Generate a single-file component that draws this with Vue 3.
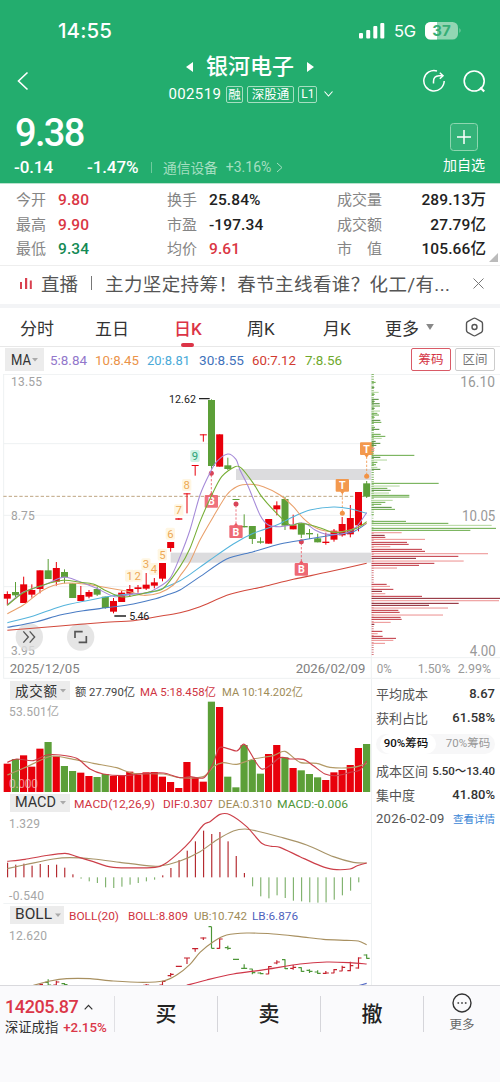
<script setup>
// Chart geometry is kept in thirds of a pixel for sub-pixel accuracy.
const STEP = 24.5
const cx = (i) => 22 + i * STEP

const rawCandles = [
  'r 664 672 686 706', 'g 636 666 676 681', 'r 620 643 699 699', 'r 643 660 674 683',
  'r 601 601 657 670', 'g 567 601 627 627', 'r 576 594 635 647', 'g 598 606 622 640',
  'g 640 640 684 684', 'r 648 675 693 693', 'r 660 666 680 685', 'g 650 657 674 678',
  'g 680 680 714 716', 'r 684 693 725 730', 'r 662 668 696 696', 'r 645 657 671 680',
  'r 645 652 657 668', 'r 609 644 656 660', 'r 624 637 647 655', 'r 579 579 626 634',
  'r 516 516 534 545', 'r 445 445 449 449', 'r 370 370 373 430', 'r 285 285 288 317',
  'r 193 193 196 215', 'g 88 90 288 296', 'r 193 193 290 290', 'g 263 286 297 300',
  'g 387 387 390 390', 'g 433 468 472 472', 'g 468 468 507 522', 'g 502 514 518 521',
  'r 447 447 521 521', 'r 394 406 418 436', 'g 380 387 467 480', 'r 434 466 478 478',
  'g 458 461 494 504', 'g 477 489 493 507', 'g 491 505 517 517', 'r 488 515 519 524',
  'r 477 482 509 515', 'r 441 462 496 500', 'r 405 444 493 502', 'r 366 366 466 484',
  'g 333 340 380 384',
]
const tone = { r: '#e8000b', g: '#5c9f38' }
const candles = rawCandles.map((s, i) => {
  const [c, hi, top, bot, lo] = s.split(' ')
  return { x: cx(i), c: tone[c], hi: +hi, top: +top, bot: +bot, lo: +lo }
})

function smooth(str) {
  const p = str.split(' ').map((s) => s.split(',').map(Number))
  let d = `M${p[0]}`
  for (let i = 0; i < p.length - 1; i++) {
    const a = p[i - 1] || p[i]
    const b = p[i]
    const c = p[i + 1]
    const e = p[i + 2] || c
    d += `C${b[0] + (c[0] - a[0]) / 7},${b[1] + (c[1] - a[1]) / 7} ${c[0] - (e[0] - b[0]) / 7},${c[1] - (e[1] - b[1]) / 7} ${c}`
  }
  return d
}

const averages = [
  ['#d2493c', '22,781 180,768 300,758 400,752 470,740 540,728 600,710 690,673 790,650 880,628 980,607 1100,580'],
  ['#4a7cc4', '22,772 110,755 180,735 250,722 330,712 400,702 460,688 500,675 540,660 600,620 680,567 760,545 840,522 920,508 1000,495 1060,485 1100,460'],
  ['#55b4dc', '22,758 100,738 180,710 260,692 340,677 400,672 450,668 500,650 540,632 570,613 630,570 700,522 760,490 830,465 880,440 930,420 1000,411 1050,416 1100,430'],
  ['#e9a06b', '22,731 70,705 130,660 190,640 260,643 330,655 390,665 430,676 480,668 520,645 540,618 570,575 600,510 640,440 680,375 710,350 750,343 790,350 840,375 880,410 910,445 950,475 1000,486 1050,480 1100,460'],
  ['#a58ad8', '22,704 70,666 130,646 180,624 200,622 240,635 290,655 345,680 400,672 440,668 470,655 510,625 540,560 570,480 600,375 630,308 650,275 683,252 708,268 720,300 745,350 780,435 805,465 840,470 875,465 900,459 920,462 945,480 975,492 1010,493 1040,488 1070,470 1100,428'],
  ['#76ae35', '22,706 70,668 130,645 190,631 240,637 280,642 320,663 365,681 410,675 450,665 490,655 540,590 570,535 600,455 634,378 665,320 705,290 725,295 760,340 785,380 830,430 870,465 900,460 950,470 1000,487 1030,485 1070,475 1100,455'],
].map(([c, p]) => ({ c, d: smooth(p) }))

const counts = [
  [1, 389, 617], [2, 413, 617], [3, 438, 583], [4, 462, 597], [5, 487, 554],
  [6, 511, 491], [7, 536, 421], [8, 560, 345], [9, 585, 258],
]
const signals = [
  { t: 'B', x: 634, y: 394, dot: 310, c: '#ec5965', o: 0.85 },
  { t: 'B', x: 708, y: 485, dot: 402, c: '#ec5965', o: 0.9 },
  { t: 'B', x: 904, y: 598, dot: 515, c: '#ec5965', o: 0.9 },
  { t: 'T', x: 1027, y: 346, dot: 430, c: '#f29345', o: 0.95 },
  { t: 'T', x: 1100, y: 236, dot: 319, c: '#f29345', o: 0.95 },
]

// Cost distribution: position, length, shade
const chipRows = `37 12 a,52 8 b,67 21 c,73 9 a,88 21 b,94 9 b,101 24 b,108 25 a,115 9 b,123 25 c,130 17 a,135 22 a,142 9 a,151 26 b,157 29 a,172 10 a,178 23 b,193 27 a,199 41 a,205 30 c,214 12 b,220 26 b,226 14 b,235 9 e,241 8 e,256 128 a,262 26 b,270 46 c,277 17 a,284 13 a,292 17 c,298 26 b,340 201 a,348 84 c,355 47 a,361 57 b,369 52 c,376 113 a,381 113 a,391 63 c,397 41 a,403 29 a,412 60 b,418 70 a,454 103 a,460 230 a,466 360 c,475 373 a,481 296 a,488 90 e,496 39 f,502 41 d,508 160 e,517 106 d,523 111 d,530 56 e,538 151 d,544 160 d,551 349 e,559 260 d,565 133 f,573 276 e,580 188 d,586 142 d,594 76 e,643 45 d,649 55 e,658 65 d,664 31 f,671 41 e,679 151 d,685 385 f,692 382 e,700 261 f,706 172 f,714 229 e,721 80 d,727 84 d,735 214 e,742 87 d,748 90 d,757 57 e,763 8 f,784 32 d,791 18 e,799 33 d,805 73 d,811 65 e,820 40 e`
const shade = { a: '#6fae51', b: '#568f40', c: '#b6d9a2', d: '#c33e49', e: '#ee9696', f: '#8e2a36' }
const chips = chipRows.split(',').map((s) => {
  const [y, w, k] = s.split(' ')
  return { y: +y, w: +w, c: shade[k] }
})

const volTops = [266, 252, 241, 275, 221, 201, 244, 273, 288, 293, 303, 306, 297, 303, 303, 290, 299, 292, 291, 305, 321, 339, 261, 307, 320, 80, 96, 305, 337, 210, 255, 296, 237, 210, 247, 279, 286, 297, 307, 315, 292, 285, 270, 219, 207]
const volTone = 'rgrrrgrggrrggrrrrrrrrrrrrgrgggggrrgrgggrrrrrg'
const volumes = volTops.map((y, i) => ({ x: cx(i) - 11, y, c: tone[volTone[i]] }))
const volLines = [
  ['#b39a66', '22,300 70,280 130,252 160,243 220,253 280,265 350,278 400,295 490,297 540,308 610,305 640,275 670,263 710,268 760,252 820,242 855,229 900,262 950,265 990,277 1060,277 1100,265'],
  ['#cc3f49', '22,262 50,252 100,257 140,240 180,240 230,250 270,282 310,297 370,302 430,296 490,294 540,308 570,305 612,308 640,265 660,217 710,228 735,209 785,282 840,248 870,252 910,253 940,272 975,297 1010,302 1050,292 1080,285 1100,258'],
].map(([c, p]) => ({ c, d: smooth(p) }))

const macdEnds = [563, 569, 566, 572, 567, 570, 569, 578, 598, 611, 619, 624, 637, 639, 635, 629, 624, 619, 614, 601, 579, 555, 527, 499, 467, 477, 471, 499, 543, 594, 634, 664, 670, 661, 669, 677, 679, 682, 683, 682, 674, 661, 647, 622]
const macdLines = [
  ['#a89468', '22,581 90,566 160,552 210,548 280,552 360,562 440,572 480,573 540,558 600,530 650,495 700,468 735,462 770,468 840,486 920,510 1000,545 1060,562 1100,564'],
  ['#cc3f49', '22,559 75,553 130,543 195,535 230,545 280,560 340,577 465,577 500,563 540,530 570,500 610,450 630,440 660,418 690,419 740,455 785,505 815,514 840,517 900,545 960,572 1000,583 1050,582 1070,573 1100,564'],
].map(([c, p]) => ({ c, d: smooth(p) }))

const bollLines = [
  ['#a89060', '100,931 150,918 200,911 270,911 340,918 430,922 490,918 530,900 570,868 600,832 640,800 680,780 740,774 820,777 900,785 970,793 1040,796 1075,798 1100,809'],
  ['#cf3648', '560,931 620,915 700,897 800,883 900,867 980,861 1050,863 1100,867'],
  ['#5268c4', '1076,932 1100,925'],
].map(([c, p]) => ({ c, d: smooth(p) }))
const bollBars = `4 r 927 932 931 928,5 g 913 932 922 930,6 r 917 932 930 921,7 g 924 932 926 929,17 r 927 932 931 930,19 r 917 932 930 919,20 r 894 905 902 898,21 r 873 875 874 874,22 r 848 867 849 849,23 r 820 830 821 821,24 r 787 795 789 789,25 g 755 820 755 820,26 r 790 821 820 792,27 g 812 824 818 820,28 g 852 854 853 853,29 g 868 881 880 880,30 g 881 898 882 893,31 g 892 898 894 896,32 r 873 898 897 875,33 r 856 868 864 861,34 g 853 882 854 881,35 r 870 884 880 877,36 g 877 890 878 889,37 g 883 894 886 889,38 g 886 897 891 895,39 r 888 897 895 894,40 r 882 895 894 884,41 r 872 889 888 877,42 r 860 889 887 872,43 r 847 881 879 849,44 g 838 851 840 850`
  .split(',')
  .map((s) => {
    const [i, k, hi, lo, o, c] = s.split(' ')
    const x = cx(+i)
    return { c: k === 'r' ? '#c5202c' : '#4d9638', d: `M${x} ${hi}V${lo}M${x - 9} ${o}H${x}M${x} ${c}H${x + 9}` }
  })

const maLegend = [
  ['5:8.84', 50, 37, '#9277cb'], ['10:8.45', 95, 44, '#eb9349'], ['20:8.81', 147, 43, '#4aaad8'],
  ['30:8.55', 199, 45, '#3f72bb'], ['60:7.12', 252, 44, '#d23a30'], ['7:8.56', 305, 37, '#6fa92c'],
]
const volLegend = [
  ['额 27.790亿', 75, 60, '#444'], ['MA 5:18.458亿', 140, 76, '#cf3442'], ['MA 10:14.202亿', 222, 81, '#a08c58'],
]
const macdLegend = [
  ['MACD(12,26,9)', 74, 81, '#cf3442'], ['DIF:0.307', 163, 50, '#cf3442'],
  ['DEA:0.310', 218, 54, '#a08c58'], ['MACD:-0.006', 277, 71, '#4f9639'],
]
const bollLegend = [
  ['BOLL(20)', 69, 50, '#cf3442'], ['BOLL:8.809', 128, 60, '#cf3442'],
  ['UB:10.742', 194, 53, '#a08c58'], ['LB:6.876', 252, 46, '#4d62bd'],
]

const stats = [
  ['今开', '9.80', 'up', '换手', '25.84%', '', '成交量', '289.13万'],
  ['最高', '9.90', 'up', '市盈', '-197.34', '', '成交额', '27.79亿'],
  ['最低', '9.34', 'down', '均价', '9.61', 'up', '市　值', '105.66亿'],
]
</script>

<template>
  <div class="screen">
    <header class="top">
      <div class="status">
        <span class="clock">14:55</span>
        <div class="sys">
          <svg width="26" height="17" viewBox="0 0 26 17" fill="#fff">
            <rect x="0" y="11" width="4" height="5.500" rx="1" /><rect x="7.200" y="8" width="4" height="8.500" rx="1" />
            <rect x="14.300" y="4" width="4" height="12.500" rx="1" /><rect x="21.300" y="1" width="4" height="15.500" rx="1" />
          </svg>
          <span class="net">5G</span>
          <svg class="batt" width="37" height="18" viewBox="0 0 37 18">
            <defs><clipPath id="cell"><rect width="33" height="17.500" rx="5.500" /></clipPath></defs>
            <g clip-path="url(#cell)"><rect width="33" height="18" fill="#92d6b3" /><rect width="12" height="18" fill="#fff" /></g>
            <path d="M34.500 6q2 2.500 0 5z" fill="#92d6b3" />
            <text x="16.500" y="14" text-anchor="middle" class="batt-num">37</text>
          </svg>
        </div>
      </div>
      <div class="title-row">
        <svg class="back" width="12" height="20" viewBox="0 0 12 20"><path d="M10.500 1.500 1.500 10l9 8.500" fill="none" stroke="#fff" stroke-width="1.600" /></svg>
        <div class="title">
          <div class="name">
            <svg width="8" height="10" viewBox="0 0 8 10"><path d="M7 0v10L0 5z" fill="#fff" /></svg>
            <span>银河电子</span>
            <svg width="8" height="10" viewBox="0 0 8 10"><path d="M1 0v10l7-5z" fill="#fff" /></svg>
          </div>
          <div class="code">
            <span class="num">002519</span><i>融</i><i class="mid">深股通</i><i class="lvl">L1</i>
            <svg width="9" height="6" viewBox="0 0 9 6"><path d="m.5.5 4 4.500 4-4.500" fill="none" stroke="#fff" stroke-width="1.100" /></svg>
          </div>
        </div>
        <div class="tools">
          <svg width="24" height="24" viewBox="0 0 24 24" fill="none" stroke="#fff" stroke-width="1.500">
            <path d="M15 2A10.200 10.200 0 1 0 22.200 12" /><path d="M11.500 14.500V12.500Q11.500 7 17 6.800h3.500" /><path d="m17.800 3.800 3.200 3-3.200 3" />
          </svg>
          <svg width="24" height="24" viewBox="0 0 24 24" fill="none" stroke="#fff" stroke-width="1.600">
            <circle cx="12.200" cy="12" r="10" /><path d="m18.200 18.500 4 4" stroke-width="2.200" />
          </svg>
        </div>
      </div>
      <div class="quote">
        <div>
          <div class="price">9.38</div>
          <div class="delta">
            <span class="d1">-0.14</span><span class="d2">-1.47%</span><span class="bar"></span>
            <span class="sector">通信设备</span><span class="sector-pct">+3.16%</span>
            <svg width="7" height="11" viewBox="0 0 7 11"><path d="m1 1 5 4.500L1 10" fill="none" stroke="#a5dfc1" /></svg>
          </div>
        </div>
        <div class="fav">
          <svg width="28" height="28" viewBox="0 0 28 28">
            <rect x=".5" y=".5" width="27" height="27" rx="3" fill="#fff" fill-opacity=".08" stroke="#8ed6b0" />
            <path d="M14 7v14M7 14h14" stroke="#fff" stroke-width="1.500" />
          </svg>
          <span>加自选</span>
        </div>
      </div>
    </header>

    <section class="stats">
      <div v-for="s in stats" :key="s[0]" class="stat">
        <span class="k">{{ s[0] }}</span><b class="v" :class="s[2]">{{ s[1] }}</b>
        <span class="k">{{ s[3] }}</span><b class="v" :class="s[5]">{{ s[4] }}</b>
        <span class="k">{{ s[6] }}</span><b class="v end">{{ s[7] }}</b>
      </div>
      <svg class="corner" width="9" height="9" viewBox="0 0 9 9"><path d="M9 0v9H0z" fill="#bbb" /></svg>
    </section>

    <section class="news">
      <svg width="14" height="13" viewBox="0 0 14 13" fill="#d9404f">
        <rect x="1" y="5" width="2" height="7" /><rect x="6" y="1" width="2.200" height="11" />
        <rect x="10.800" y="3.500" width="2" height="8.500" />
      </svg>
      <span class="live">直播</span><span class="sep"></span>
      <span class="headline">主力坚定持筹！春节主线看谁？化工/有...</span>
      <svg width="11" height="11" viewBox="0 0 11 11"><path d="m.5.5 10 10m0-10-10 10" stroke="#777" fill="none" /></svg>
    </section>

    <nav class="tabs">
      <span>分时</span><span>五日</span><span class="on">日K</span><span>周K</span><span>月K</span>
      <span class="more">更多<svg width="8" height="6" viewBox="0 0 9 7"><path d="M0 0h9L4.500 7z" fill="#888" /></svg></span>
      <svg width="19" height="20" viewBox="0 0 19 20" fill="none" stroke="#555" stroke-width="1.400">
        <path d="M8.300 1.500q1.200-.7 2.400 0l5.700 3.200q1.100.7 1.100 2v6.600q0 1.300-1.100 2l-5.700 3.200q-1.200.7-2.400 0l-5.700-3.200q-1.100-.7-1.100-2V6.700q0-1.300 1.100-2z" />
        <circle cx="9.500" cy="10" r="2.500" />
      </svg>
    </nav>

    <div class="ma">
      <svg width="400" height="27" viewBox="0 347 400 27">
        <rect x="5" y="348" width="39" height="23" fill="#ececec" />
        <text x="11" y="364.500" textLength="20" lengthAdjust="spacingAndGlyphs" class="tag">MA</text><path d="M32 358h6l-3 3.500z" fill="#aaa" />
        <text v-for="l in maLegend" :key="l[0]" :x="l[1]" y="364.500" :textLength="l[2]" lengthAdjust="spacingAndGlyphs" :fill="l[3]" class="leg ma-t">{{ l[0] }}</text>
      </svg>
      <span class="btn hot">筹码</span><span class="btn">区间</span>
    </div>

    <svg class="main" width="500" height="305" viewBox="0 12 1500 915">
      <g stroke="#eef1f2" stroke-width="3">
        <path d="M10 13H1500M10 221H1113M10 436H1113M10 650H1113M10 863H1500M10 925H1500M11 12V925M1114 12V925" />
      </g>
      <g fill="#dcdcde"><rect x="708" y="297" width="405" height="33" /><rect x="512" y="548" width="601" height="30" /></g>
      <path d="M10 379H1113" stroke="#bfa583" stroke-width="3" stroke-dasharray="10 6" />
      <g class="axis">
        <text x="33" y="48" textLength="93">13.55</text><text x="33" y="451" textLength="71">8.75</text><text x="33" y="854" textLength="71">3.95</text>
        <g class="big">
          <text x="1381" y="51" textLength="104" lengthAdjust="spacingAndGlyphs">16.10</text><text x="1386" y="454" textLength="100" lengthAdjust="spacingAndGlyphs">10.05</text><text x="1409" y="857" textLength="78" lengthAdjust="spacingAndGlyphs">4.00</text>
        </g>
      </g>
      <circle cx="88" cy="801" r="41" fill="#dededf" fill-opacity=".8" /><circle cx="242" cy="801" r="41" fill="#dededf" fill-opacity=".8" />
      <path d="m70 784 15 17-15 17M89 784l15 17-15 17" fill="none" stroke="#555" stroke-width="4" />
      <path d="M225 804V785H248M259 798V817H236" fill="none" stroke="#555" stroke-width="5" />
      <g v-for="c in candles" :key="c.x" :fill="c.c">
        <rect :x="c.x - 1.500" :y="c.hi" width="3" :height="c.lo - c.hi" /><rect :x="c.x - 10.500" :y="c.top" width="21" :height="c.bot - c.top" />
      </g>
      <g v-for="n in counts" :key="n[0]">
        <rect :x="n[1] - 14" :y="n[2] - 18" width="28" height="36" :fill="n[0] === 9 ? '#cff3e5' : '#fff6e2'" rx="5" />
        <text :x="n[1]" :y="n[2] + 12" text-anchor="middle" :fill="n[0] === 9 ? '#2da277' : '#eda956'" class="cnt">{{ n[0] }}</text>
      </g>
      <g v-for="s in signals" :key="s.x">
        <path :d="`M${s.x} ${s.y}V${s.dot}`" :stroke="s.c" stroke-width="3" stroke-dasharray="7 5" opacity=".8" />
        <circle :cx="s.x" :cy="s.dot" r="7.500" :fill="s.t === 'B' ? '#d94458' : s.c" />
        <rect :x="s.x - 20" :y="s.y - 19" width="40" height="38" rx="3" :fill="s.c" :opacity="s.o" />
        <path :d="s.t === 'B' ? `M${s.x - 7} ${s.y - 18}l7-9 7 9z` : `M${s.x - 7} ${s.y + 18}l7 9 7-9z`" :fill="s.c" />
        <text :x="s.x" :y="s.y + 12" text-anchor="middle" class="sig">{{ s.t }}</text>
      </g>
      <path v-for="a in averages" :key="a.c" :d="a.d" :stroke="a.c" fill="none" stroke-width="3.200" />
      <path d="M597 86H629M343 738H378" stroke="#222" stroke-width="4" />
      <g class="pin"><text x="507" y="99" textLength="81">12.62</text><text x="388" y="750" textLength="60">5.46</text></g>
      <path d="M1118 12V436" stroke="#86b96c" stroke-width="7" stroke-dasharray="3 4" />
      <path d="M1118 436V486" stroke="#b4d3a3" stroke-width="5" stroke-dasharray="3 4" />
      <path d="M1118 488V857" stroke="#d77d83" stroke-width="6" stroke-dasharray="3 4" />
      <rect v-for="c in chips" :key="c.y" x="1115" :y="c.y - 1.500" :width="c.w" height="3.200" :fill="c.c" />
      <g class="date">
        <text x="29" y="909" textLength="210" lengthAdjust="spacingAndGlyphs">2025/12/05</text><text x="887" y="909" textLength="209" lengthAdjust="spacingAndGlyphs">2026/02/09</text>
        <g class="pct"><text x="1130" y="909" textLength="45" lengthAdjust="spacingAndGlyphs">0%</text><text x="1253" y="909" textLength="98" lengthAdjust="spacingAndGlyphs">1.50%</text><text x="1373" y="909" textLength="100" lengthAdjust="spacingAndGlyphs">2.99%</text></g>
      </g>
    </svg>

    <div class="lower">
      <div class="subs">
        <svg width="371" height="113" viewBox="0 679 371 113">
          <rect x="10" y="681" width="60" height="19" fill="#ececec" />
          <text x="15" y="695.500" textLength="42" class="tag cjk">成交额</text><path d="M60 689h6l-3 3.500z" fill="#aaa" />
          <text v-for="l in volLegend" :key="l[0]" :x="l[1]" y="695.500" :textLength="l[2]" lengthAdjust="spacingAndGlyphs" :fill="l[3]" class="leg">{{ l[0] }}</text>
          <text x="9" y="715.500" textLength="50" class="lim">53.501亿</text>
          <g transform="translate(0 675) scale(.33333)">
            <rect v-for="v in volumes" :key="v.x" :x="v.x" :y="v.y" width="21.500" :height="351 - v.y" :fill="v.c" />
            <path v-for="l in volLines" :key="l.c" :d="l.d" :stroke="l.c" fill="none" stroke-width="3.500" />
          </g>
          <text x="9" y="787.500" textLength="29" class="lim faint">0.000</text>
        </svg>
        <svg width="371" height="112" viewBox="0 792 371 112">
          <rect x="10" y="794" width="60" height="18" fill="#ececec" />
          <text x="15" y="807" textLength="41" lengthAdjust="spacingAndGlyphs" class="tag">MACD</text><path d="M60 801h6l-3 3.500z" fill="#aaa" />
          <text v-for="l in macdLegend" :key="l[0]" :x="l[1]" y="807.500" :textLength="l[2]" lengthAdjust="spacingAndGlyphs" :fill="l[3]" class="leg">{{ l[0] }}</text>
          <text x="9" y="827.500" textLength="31" class="lim">1.329</text><text x="9" y="899.500" textLength="35" class="lim">-0.540</text>
          <g transform="translate(0 675) scale(.33333)">
            <rect v-for="(e, i) in macdEnds" :key="i" :x="cx(i) - 1" :y="Math.min(e, 607)" width="3.500" :height="Math.abs(607 - e)" :fill="e < 607 ? '#b42a30' : '#82b370'" />
            <path v-for="l in macdLines" :key="l.c" :d="l.d" :stroke="l.c" fill="none" stroke-width="3.500" />
            <path d="M10 686H1113" stroke="#eef1f2" stroke-width="3" />
          </g>
        </svg>
        <svg width="371" height="81" viewBox="0 904 371 81">
          <rect x="10" y="906" width="54" height="18" fill="#ececec" />
          <text x="15" y="919" textLength="37" lengthAdjust="spacingAndGlyphs" class="tag">BOLL</text><path d="M55 913.500h6l-3 3.500z" fill="#aaa" />
          <text v-for="l in bollLegend" :key="l[0]" :x="l[1]" y="919.500" :textLength="l[2]" lengthAdjust="spacingAndGlyphs" :fill="l[3]" class="leg">{{ l[0] }}</text>
          <text x="9" y="940" textLength="38" class="lim">12.620</text>
          <g transform="translate(0 675) scale(.33333)" fill="none" stroke-width="3.500">
            <path v-for="(b, i) in bollBars" :key="i" :d="b.d" :stroke="b.c" />
            <path v-for="l in bollLines" :key="l.c" :d="l.d" :stroke="l.c" />
          </g>
        </svg>
      </div>
      <aside class="side">
        <div class="row"><span>平均成本</span><b>8.67</b></div>
        <div class="row"><span>获利占比</span><b>61.58%</b></div>
        <div class="seg"><span class="sel">90%筹码</span><span>70%筹码</span></div>
        <div class="row"><span>成本区间</span><b class="tight">5.50～13.40</b></div>
        <div class="row"><span>集中度</span><b>41.80%</b></div>
        <div class="row last"><span class="day">2026-02-09</span><a>查看详情</a></div>
      </aside>
    </div>

    <footer class="bottom">
      <div class="index">
        <div class="idx"><span>14205.87</span><svg width="9" height="6" viewBox="0 0 9 6"><path d="m.7 5.300 3.800-4 3.800 4" fill="none" stroke="#333" stroke-width="1.200" /></svg></div>
        <div class="idx2">深证成指<em>+2.15%</em></div>
      </div>
      <div class="act">买</div><div class="act">卖</div><div class="act">撤</div>
      <div class="etc">
        <svg width="20" height="20" viewBox="0 0 20 20"><circle cx="10" cy="10" r="9" fill="none" stroke="#333" stroke-width="1.400" /><path d="M5.500 10h1.600M9.200 10h1.600M12.900 10h1.600" stroke="#333" stroke-width="1.600" /></svg>
        <span>更多</span>
      </div>
    </footer>
  </div>
</template>

<style>
body { margin: 0; background: #fafafc; }
</style>
<style scoped>
.screen { width: 500px; height: 1082px; overflow: hidden; background: #fff; font-family: Roboto, "Noto Sans CJK SC", sans-serif; color: #333; display: flex; flex-direction: column; }
.screen > * { flex: none; box-sizing: border-box; }
svg { display: block; flex: none; }
.top { height: 184px; background: #23ad6e; color: #fff; border-bottom: 1px solid #b9e3ce; }
.status { height: 55px; box-sizing: border-box; padding: 7px 38px 0 58px; display: flex; justify-content: space-between; align-items: center; }
.clock { font: 500 20.500px/30px Inter, sans-serif; letter-spacing: .1px; }
.sys { display: flex; align-items: center; margin-top: -1px; }
.net { font: 400 16.500px/24px Inter, sans-serif; margin: 1px 8px 0 9px; width: 23px; letter-spacing: -.3px; }
.batt-num { font: 700 15px Inter, sans-serif; fill: #37ae76; }
.title-row { height: 52px; display: flex; align-items: flex-start; justify-content: space-between; padding: 0 14px 0 17px; }
.back { margin-top: 16px; }
.title { width: 190px; display: flex; flex-direction: column; align-items: center; margin-left: 49px; }
.name { display: flex; align-items: center; gap: 12px; font-size: 22px; line-height: 24px; font-weight: 500; }
.code { display: flex; align-items: center; height: 18px; margin-top: 6px; margin-left: 2px; font-size: 15px; }
.code .num { letter-spacing: .35px; margin-right: 5px; }
.code i { font-style: normal; font-size: 12.500px; line-height: 15px; height: 15px; border: 1px solid #a5dfc1; border-radius: 2px; padding: 0 1px; margin-right: 4px; }
.code i.mid { padding: 0 4px; }
.code i.lvl { padding: 0 2px; margin-right: 7px; font-size: 12px; }
.tools { display: flex; gap: 16px; margin-top: 14px; }
.quote { display: flex; justify-content: space-between; padding: 0 15px; }
.price { font-size: 38px; font-weight: 500; line-height: 38px; margin-top: 7px; letter-spacing: -1.700px; }
.delta { display: flex; align-items: center; margin-top: 6px; margin-left: -1px; height: 18px; font-size: 17px; font-weight: 500; }
.d1 { width: 73px; }
.d2 { width: 64px; white-space: nowrap; }
.d1, .d2 { letter-spacing: -.1px; }
.bar { width: 1px; height: 11px; background: #6fcb9d; margin-right: 11px; }
.sector, .sector-pct { font-size: 13.700px; font-weight: 400; color: #a5dfc1; }
.sector-pct { margin: 0 5px 0 8px; font-size: 14px; }
.fav { display: flex; flex-direction: column; align-items: center; margin: 16px 0 0; font-size: 14px; line-height: 20px; }
.fav span { margin-top: 4px; }
.stats { position: relative; height: 82px; border-bottom: 1px solid #eee; padding: 4px 14px 0 16px; }
.stat { display: grid; grid-template-columns: 42px 109px 42px 128px 46px 1fr; height: 24.500px; line-height: 25px; }
.k { font-size: 15px; color: #858585; white-space: nowrap; }
.v { font-size: 15.500px; font-weight: 500; letter-spacing: .1px; color: #222; }
.v.end { text-align: right; }
.up { color: #da3644; }
.down { color: #148a55; }
.corner { position: absolute; right: 2px; bottom: 3px; }
.news { height: 42px; padding: 0 16px 4px 19px; display: flex; align-items: center; border-bottom: 4px solid #f3f4f6; font-size: 18.500px; color: #555; }
.live { margin-left: 8px; }
.sep { width: 1px; height: 14px; background: #777; margin: 0 13px 0 13px; }
.headline { flex: 1; white-space: nowrap; letter-spacing: .4px; }
.tabs { height: 39px; border-bottom: 1px solid #e8e8e8; display: grid; grid-template-columns: 75px 79px 73px 76px 62px 80px 19px; align-items: center; padding: 0 0 0 20px; font-size: 17px; color: #333; }
.tabs .on { color: #dc3447; font-weight: 500; position: relative; justify-self: start; }
.on::after { content: ""; position: absolute; left: 7px; bottom: -7px; width: 13px; height: 4px; border-radius: 2px; background: #dc3447; }
.more { display: flex; align-items: center; gap: 7px; }
.ma { height: 27px; display: flex; align-items: flex-start; }
.btn { box-sizing: border-box; width: 40px; height: 23px; margin: 1px 0 0 4px; border: 1px solid #ccc; border-radius: 2px; text-align: center; font-size: 12.500px; line-height: 21px; color: #777; }
.btn.hot { margin-left: 11px; border-color: #d95a66; color: #d43444; }
.main { overflow: hidden; }
.tag { font-size: 15px; fill: #333; }
.tag.cjk { font-size: 13.500px; }
.leg { font-size: 11.700px; }
.leg.ma-t { font-size: 13.500px; }
.axis { font-size: 36px; fill: #a2a2a2; }
.big { font-size: 43px; fill: #999; }
.pin { font-size: 32px; fill: #222; }
.cnt { font-size: 34px; }
.sig { font-size: 32px; font-weight: 700; fill: #fff; }
.date { font-size: 36px; fill: #808080; }
.pct { font-size: 36px; fill: #999; }
.lim { font-size: 12px; fill: #a6a6a6; }
.faint { fill: #f3c8c8; opacity: .7; }
.lower { height: 306px; display: flex; }
.side { flex: 1; border-left: 1px solid #eef1f2; padding: 2px 5px 0 4px; }
.subs { width: 371px; flex: none; }
.row { display: flex; align-items: center; justify-content: space-between; height: 24px; font-size: 13px; color: #555; white-space: nowrap; }
.row b { font-weight: 500; font-size: 13px; color: #333; letter-spacing: 0; }
.row b.tight { font-size: 11.500px; letter-spacing: -.1px; }
.row a { font-size: 10.500px; color: #3b86d6; }
.day { letter-spacing: .3px; }
.seg { display: flex; justify-content: space-around; height: 20px; line-height: 19px; margin: 5px 0 4px; border-radius: 10px; background: #f7f7f8; font-size: 11.500px; color: #999; }
.seg .sel { color: #111; font-weight: 500; background: #fff; border-radius: 10px; padding: 0 8px 0 4px; margin-left: -1px; }
.bottom { flex: 1 !important; background: #fafafc; border-top: 1px solid #d9d9dd; display: flex; align-items: flex-start; }
.index { width: 115px; box-sizing: border-box; height: 36px; margin-top: 10px; padding-left: 5px; border-right: 1px solid #e0e0e4; white-space: nowrap; }
.idx { display: flex; align-items: center; gap: 6px; color: #db3648; font-size: 18px; font-weight: 500; line-height: 20px; margin-top: 1px; letter-spacing: -.4px; }
.idx2 { font-size: 13.300px; line-height: 20px; margin-top: 1px; }
.idx2 em { font-style: normal; font-weight: 500; color: #db3648; margin-left: 5px; }
.act { width: 103px; box-sizing: border-box; height: 36px; margin-top: 10px; border-right: 1px solid #d5d5da; text-align: center; font-size: 21px; font-weight: 500; line-height: 37px; color: #222; }
.etc { flex: 1; display: flex; flex-direction: column; align-items: center; padding-top: 7px; font-size: 12.500px; color: #666; line-height: 20px; }
.etc span { margin-top: 2px; }
</style>
